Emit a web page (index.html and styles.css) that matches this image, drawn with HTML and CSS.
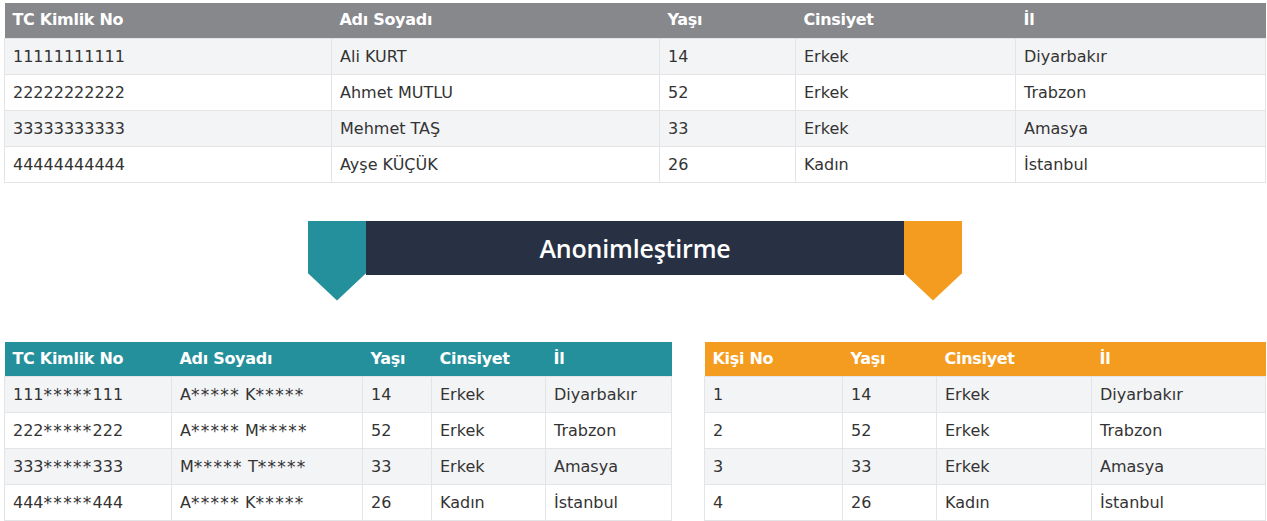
FILE: index.html
```html
<!DOCTYPE html>
<html lang="tr">
<head>
<meta charset="utf-8">
<title>Anonimleştirme</title>
<link rel="stylesheet" href="styles.css">
</head>
<body>
<div class="page">
  <table class="tbl tbl-top gray">
    <colgroup><col style="width:327px"><col style="width:328px"><col style="width:136px"><col style="width:220px"><col style="width:250px"></colgroup>
    <thead><tr><th>TC Kimlik No</th><th>Adı Soyadı</th><th>Yaşı</th><th>Cinsiyet</th><th>İl</th></tr></thead>
    <tbody>
      <tr><td>11111111111</td><td>Ali KURT</td><td>14</td><td>Erkek</td><td>Diyarbakır</td></tr>
      <tr><td>22222222222</td><td>Ahmet MUTLU</td><td>52</td><td>Erkek</td><td>Trabzon</td></tr>
      <tr><td>33333333333</td><td>Mehmet TAŞ</td><td>33</td><td>Erkek</td><td>Amasya</td></tr>
      <tr><td>44444444444</td><td>Ayşe KÜÇÜK</td><td>26</td><td>Kadın</td><td>İstanbul</td></tr>
    </tbody>
  </table>

  <div class="banner">
    <div class="tab tab-teal"></div>
    <div class="band">Anonimleştirme</div>
    <div class="tab tab-orange"></div>
  </div>

  <div class="bottom">
    <table class="tbl tbl-left teal">
      <colgroup><col style="width:167px"><col style="width:191px"><col style="width:69px"><col style="width:114px"><col style="width:126px"></colgroup>
      <thead><tr><th>TC Kimlik No</th><th>Adı Soyadı</th><th>Yaşı</th><th>Cinsiyet</th><th>İl</th></tr></thead>
      <tbody>
        <tr><td>111<span class="ast">*****</span>111</td><td>A<span class="ast">*****</span> K<span class="ast">*****</span></td><td>14</td><td>Erkek</td><td>Diyarbakır</td></tr>
        <tr><td>222<span class="ast">*****</span>222</td><td>A<span class="ast">*****</span> M<span class="ast">*****</span></td><td>52</td><td>Erkek</td><td>Trabzon</td></tr>
        <tr><td>333<span class="ast">*****</span>333</td><td>M<span class="ast">*****</span> T<span class="ast">*****</span></td><td>33</td><td>Erkek</td><td>Amasya</td></tr>
        <tr><td>444<span class="ast">*****</span>444</td><td>A<span class="ast">*****</span> K<span class="ast">*****</span></td><td>26</td><td>Kadın</td><td>İstanbul</td></tr>
      </tbody>
    </table>
    <table class="tbl tbl-right orange">
      <colgroup><col style="width:138px"><col style="width:94px"><col style="width:155px"><col style="width:174px"></colgroup>
      <thead><tr><th>Kişi No</th><th>Yaşı</th><th>Cinsiyet</th><th>İl</th></tr></thead>
      <tbody>
        <tr><td>1</td><td>14</td><td>Erkek</td><td>Diyarbakır</td></tr>
        <tr><td>2</td><td>52</td><td>Erkek</td><td>Trabzon</td></tr>
        <tr><td>3</td><td>33</td><td>Erkek</td><td>Amasya</td></tr>
        <tr><td>4</td><td>26</td><td>Kadın</td><td>İstanbul</td></tr>
      </tbody>
    </table>
  </div>
</div>
</body>
</html>
```

FILE: styles.css
```css
html, body {
  margin: 0;
  padding: 0;
  background: #ffffff;
}
body {
  font-family: "DejaVu Sans", Verdana, sans-serif;
  color: #333333;
}
.page {
  padding: 3px 2px 0 4px;
  display: flex;
  flex-direction: column;
}
.tbl {
  border-collapse: collapse;
  table-layout: fixed;
}
.tbl-top { width: 1261px; }
.tbl-left { width: 667px; }
.tbl-right { width: 561px; }
.tbl th {
  height: 35px;
  padding: 0 0 1px 8px;
  text-align: left;
  font-size: 16px;
  font-weight: bold;
  color: #ffffff;
  box-sizing: border-box;
  letter-spacing: -0.3px;
}
.gray th { background: #87888c; }
.teal th { background: #24909c; }
.orange th { background: #f39c20; }
.tbl td {
  height: 36px;
  padding: 0 0 0 8px;
  font-size: 16px;
  color: #333333;
  border: 1px solid #e3e4e6;
  box-sizing: border-box;
  white-space: nowrap;
}
.ast {
  font-size: 17px;
  vertical-align: -1px;
  letter-spacing: 1.3px;
}
.tbl tbody tr:nth-child(odd) td { background: #f3f4f6; }
.tbl tbody tr:nth-child(even) td { background: #ffffff; }

.banner {
  display: flex;
  align-items: flex-start;
  margin: 38px 0 0 304px;
  height: 80px;
}
.tab {
  width: 58px;
  height: 80px;
  clip-path: polygon(0 0, 100% 0, 100% 66%, 50% 100%, 0 66%);
}
.tab-teal { background: #24909c; }
.tab-orange { background: #f39c20; }
.band {
  width: 538px;
  height: 54px;
  background: #283044;
  color: #ffffff;
  font-family: "Open Sans", "Lato", sans-serif;
  font-weight: 600;
  font-size: 25px;
  letter-spacing: -0.2px;
  display: flex;
  align-items: center;
  justify-content: center;
}
.bottom {
  display: flex;
  gap: 32px;
  margin-top: 41px;
}
```
